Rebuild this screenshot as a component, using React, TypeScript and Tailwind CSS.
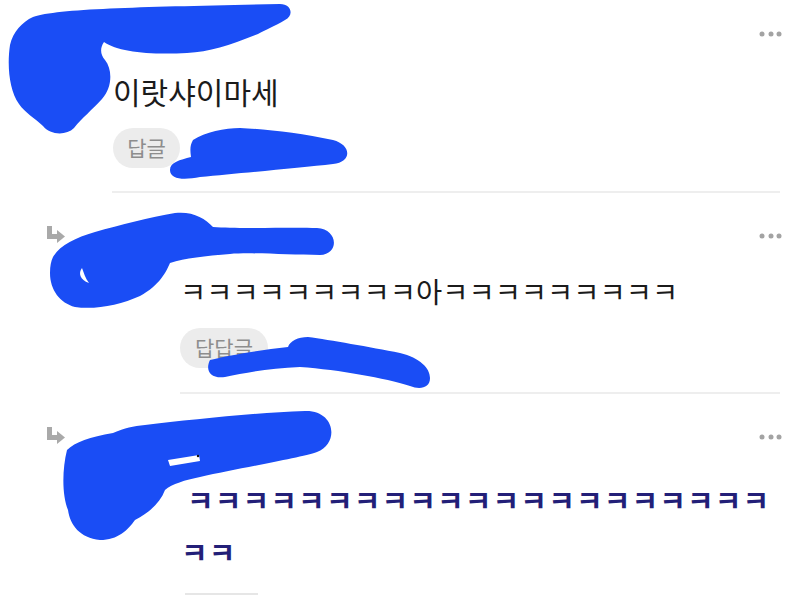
import React from "react";

function Dots() {
  return (
    <svg width="24" height="6" viewBox="0 0 24 6" className="block">
      <circle cx="3" cy="3" r="2.5" fill="#a3a3a3" />
      <circle cx="12" cy="3" r="2.5" fill="#a3a3a3" />
      <circle cx="20" cy="3" r="2.5" fill="#a3a3a3" />
    </svg>
  );
}

function ReplyArrow() {
  return (
    <svg width="19" height="17" viewBox="0 0 19 17" className="block">
      <path d="M0 0 H5 V8 H11 V13 H0 Z" fill="#a9a9a9" />
      <path d="M10 4 L18 10.5 L10 17 Z" fill="#a9a9a9" />
    </svg>
  );
}

function Pill({ label, w }: { label: string; w: string }) {
  return (
    <div
      className={`h-[40px] ${w} rounded-full bg-[#ececec] flex items-center justify-center text-[21px] text-[#8d8d8d]`}
    >
      {label}
    </div>
  );
}

export default function App() {
  return (
    <div
      className="relative w-[800px] h-[600px] overflow-hidden bg-white"
      style={{ fontFamily: '"Noto Sans CJK KR", "Noto Sans", sans-serif' }}
    >
      {/* Comment 1 */}
      <div className="pl-[113px] pr-[17px]">
        <div className="h-[73px] flex justify-end">
          <div className="pt-[31px]">
            <Dots />
          </div>
        </div>
        <div className="text-[30px] leading-[36px] text-[#1b1b1b]">이랏샤이마세</div>
        <div className="mt-[19px]">
          <Pill label="답글" w="w-[67px]" />
        </div>
        <div className="mt-[23px] ml-[-1px] mr-[3px] h-[2px] bg-[#eeeeee]" />
      </div>

      {/* Comment 2 */}
      <div className="flex">
        <div className="w-[180px] shrink-0 pl-[47px] pt-[33px]">
          <ReplyArrow />
        </div>
        <div className="flex-1 pr-[17px]">
          <div className="h-[80px] flex justify-end">
            <div className="pt-[40px]">
              <Dots />
            </div>
          </div>
          <div className="text-[28.5px] leading-[36px] text-[#1b1b1b]">
            ㅋㅋㅋㅋㅋㅋㅋㅋㅋ아ㅋㅋㅋㅋㅋㅋㅋㅋㅋ
          </div>
          <div className="mt-[19px]">
            <Pill label="답답글" w="w-[88px]" />
          </div>
          <div className="mt-[24px] mr-[3px] h-[2px] bg-[#eeeeee]" />
        </div>
      </div>

      {/* Comment 3 */}
      <div className="flex">
        <div className="w-[180px] shrink-0 pl-[47px] pt-[33px]">
          <ReplyArrow />
        </div>
        <div className="flex-1 pr-[17px]">
          <div className="h-[79px] flex justify-end">
            <div className="pt-[40px]">
              <Dots />
            </div>
          </div>
          <div className="text-[29px] leading-[52px] font-bold tracking-[1.1px] text-[#231f78]">
            <div className="pl-[7px]">ㅋㅋㅋㅋㅋㅋㅋㅋㅋㅋㅋㅋㅋㅋㅋㅋㅋㅋㅋㅋㅋ</div>
            <div className="pl-[1px]">ㅋㅋ</div>
          </div>
          <div className="mt-[16px] ml-[5px] w-[73px] h-[2px] bg-[#e6e6e6]" />
        </div>
      </div>

      {/* Scribbles covering names and avatars */}
      <svg
        className="absolute inset-0 pointer-events-none"
        width="800"
        height="600"
        viewBox="0 0 800 600"
      >
        <g fill="#1a4df5">
          <path d="M 33 17 C 60 8, 150 7, 280 4 C 292 4, 294 16, 285 20 C 275 26, 265 30, 258 34 C 230 45, 210 52, 187 53 C 150 55, 118 52, 104 42 C 100 48, 100 54, 105 60 C 113 70, 112 88, 102 99 C 92 110, 82 118, 74 128 C 66 136, 50 135, 43 126 C 35 118, 25 113, 19 104 C 9 90, 7 65, 10 45 C 13 32, 22 22, 33 17 Z" />
          <path d="M 193 140 C 205 132, 225 128, 240 128 C 265 129, 300 133, 333 140 C 352 145, 352 162, 333 164 C 300 168, 240 173, 200 177 C 185 180, 170 180, 170 170 C 170 162, 180 160, 191 157 C 190 150, 190 145, 193 140 Z" />
          <path d="M 53 257 C 60 245, 75 238, 95 232 C 120 225, 150 217, 175 213 C 192 211, 205 218, 213 227 C 240 229, 290 227, 317 228 C 338 229, 340 254, 320 255 C 290 255, 250 252, 230 254 C 205 256, 185 258, 170 263 C 166 272, 160 285, 140 296 C 120 305, 95 310, 75 307 C 60 303, 50 290, 50 273 C 50 266, 51 261, 53 257 Z" />
          <path d="M 210 360 C 230 355, 260 350, 288 347 C 290 341, 298 337, 308 337 C 330 340, 370 347, 400 353 C 420 358, 430 368, 430 378 C 430 388, 420 390, 410 386 C 385 378, 340 370, 300 367 C 270 368, 245 373, 225 377 C 210 379, 205 370, 210 360 Z" />
          <path d="M 67 450 C 75 442, 90 437, 113 433 C 125 428, 133 426, 145 425 C 190 420, 250 413, 305 411 C 335 410, 340 443, 317 452 C 300 458, 240 468, 200 477 C 185 480, 172 484, 165 490 C 160 503, 150 512, 135 520 C 128 530, 118 540, 100 540 C 80 538, 70 525, 68 510 C 62 495, 62 470, 67 450 Z" />
        </g>
        <path d="M 82 268 C 78 273, 80 280, 89 283 C 85 278, 84 273, 82 268 Z" fill="#ffffff" />
        <path d="M 168 460 L 199 455 L 200 461 L 170 466 Z" fill="#ffffff" />
        <circle cx="198" cy="456" r="1.2" fill="#111" />
      </svg>
    </div>
  );
}
